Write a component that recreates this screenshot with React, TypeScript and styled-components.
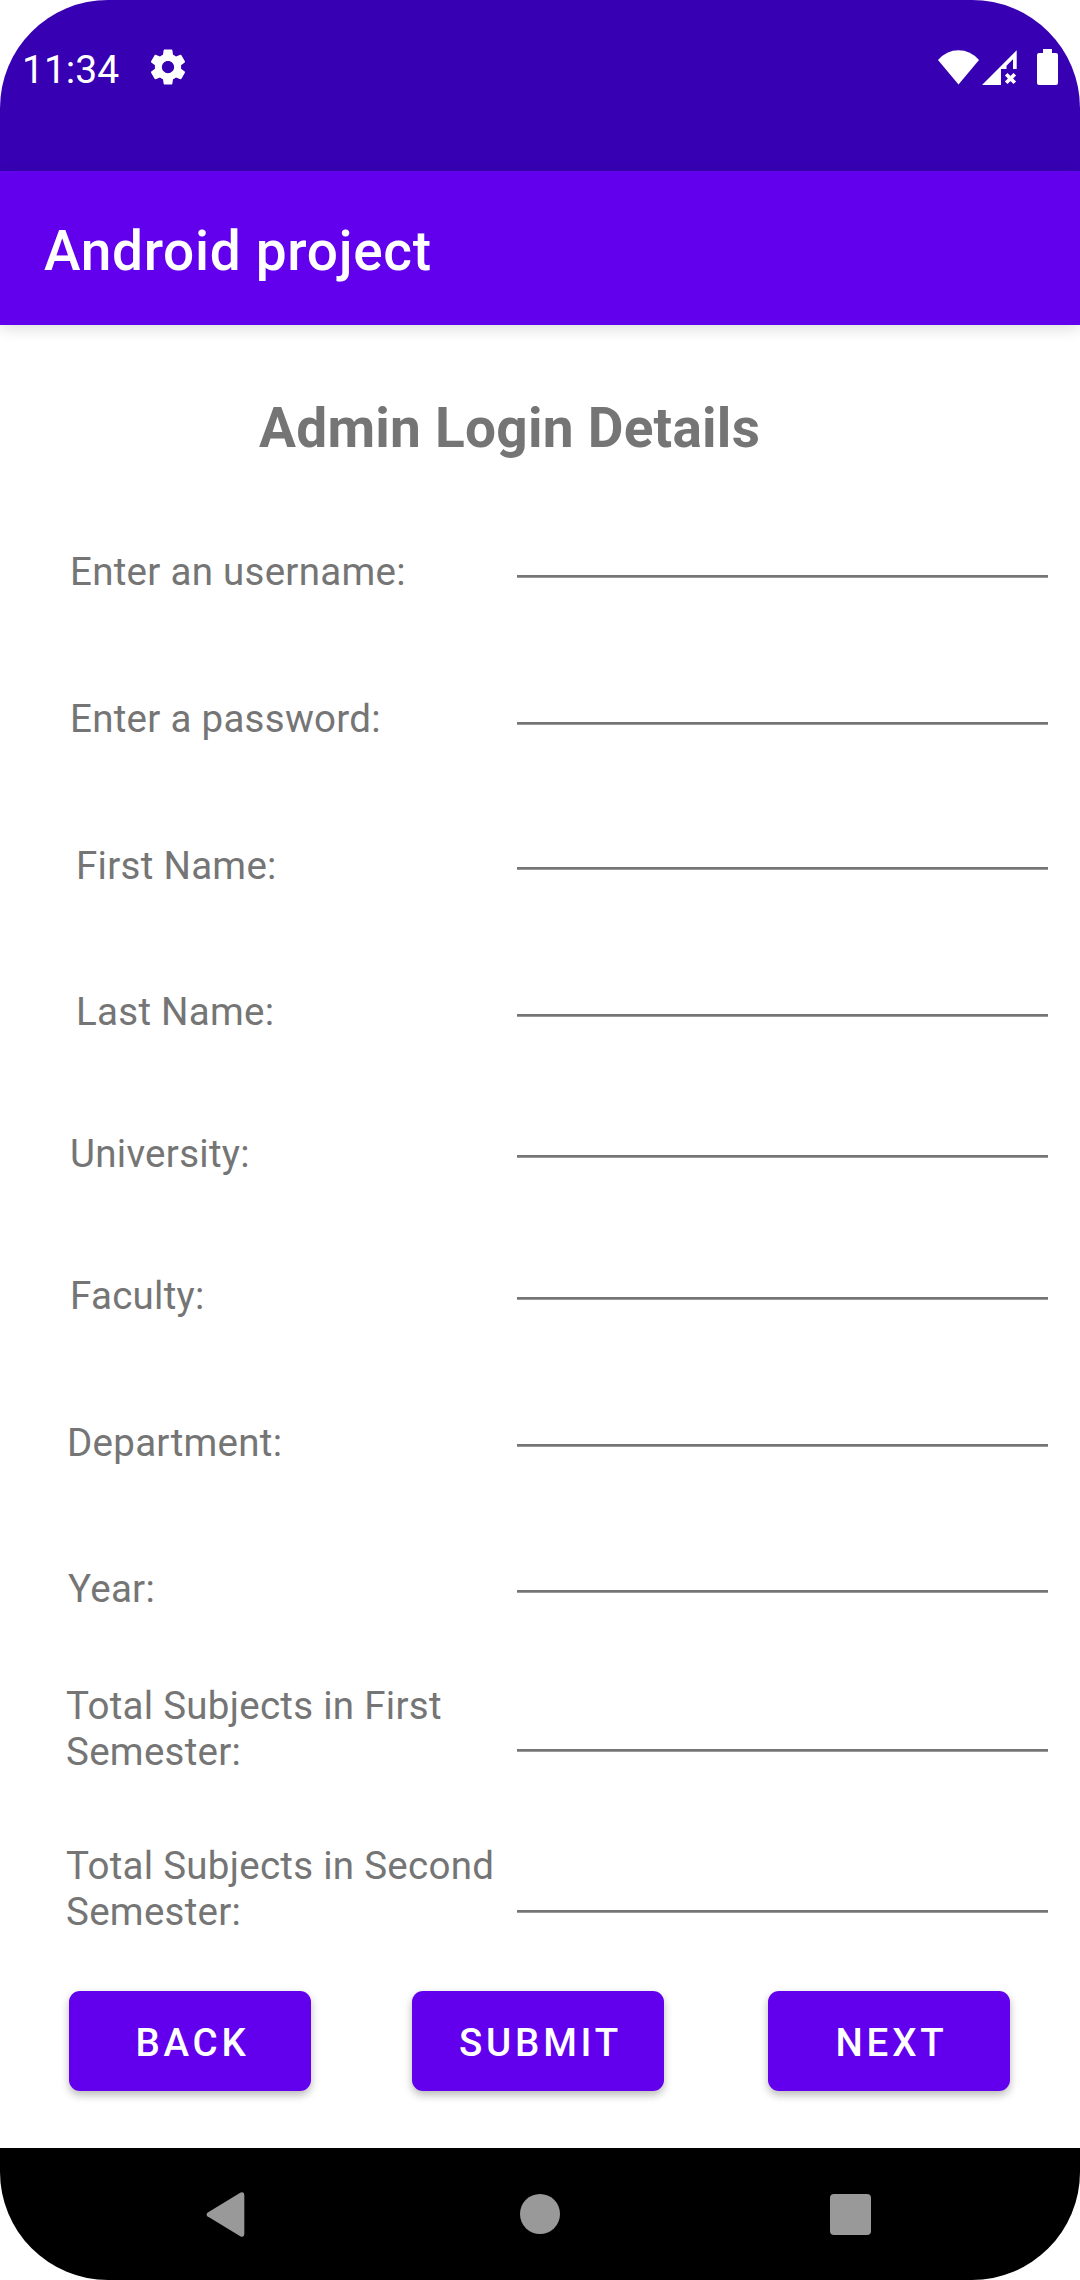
import React from "react";
import styled, { createGlobalStyle } from "styled-components";

const GlobalStyle = createGlobalStyle`
  * { box-sizing: border-box; }
  html, body { margin: 0; background: #fff; }
  body { font-family: Roboto, "Noto Sans", sans-serif; }
`;

const Screen = styled.div`
  width: 1080px;
  height: 2280px;
  border-radius: 108px;
  overflow: hidden;
  display: flex;
  flex-direction: column;
  background: #fff;
`;

const StatusBar = styled.header`
  height: 171px;
  flex: none;
  background: #3700b3;
  color: #fff;
  display: flex;
  align-items: flex-start;
  padding: 46px 22px 0 22px;
`;

const Clock = styled.span`
  font-size: 39px;
  line-height: 48px;
  width: 124px;
`;

const StatusIcons = styled.div`
  margin-left: auto;
  display: flex;
  align-items: flex-start;
`;

const Glyph = styled.svg<{ $gap?: number }>`
  display: block;
  flex: none;
  margin-left: ${(p) => p.$gap ?? 0}px;
`;

const Toolbar = styled.div`
  height: 154px;
  flex: none;
  background: #6200ee;
  display: flex;
  align-items: center;
  padding: 6px 44px 0;
  box-shadow: 0 4px 14px rgba(0, 0, 0, 0.13);
`;

const ToolbarTitle = styled.h1`
  margin: 0;
  color: #fff;
  font-size: 55px;
  font-weight: 500;
  line-height: 64px;
  letter-spacing: 0.0125em;
`;

const Content = styled.main`
  flex: 1;
  display: flex;
  flex-direction: column;
`;

const FormTitle = styled.h2`
  margin: 0;
  padding: 71px 0 0 259px;
  height: 180px;
  color: #757575;
  font-size: 55px;
  font-weight: 700;
  line-height: 64px;
  letter-spacing: 0.23px;
`;

const Form = styled.form`
  display: flex;
  flex-direction: column;
  height: 1456px;
`;

const Field = styled.div<{ $height: number }>`
  height: ${(p) => p.$height}px;
  flex: none;
  display: flex;
  justify-content: space-between;
  padding-right: 32px;
`;

const Label = styled.label<{ $indent: number; $drop: number }>`
  width: 517px;
  padding: ${(p) => p.$drop}px 0 0 ${(p) => p.$indent}px;
  color: #757575;
  font-size: 38.5px;
  line-height: 46px;
  letter-spacing: 0.28px;
  white-space: pre-line;
`;

const Input = styled.input<{ $depth: number }>`
  width: 531px;
  height: ${(p) => p.$depth}px;
  padding: 0;
  border: 0;
  border-bottom: 2px solid #757575;
  border-radius: 0;
  box-shadow: 0 1px 0 #999;
  outline: none;
  background: transparent;
  color: #212121;
  font: 400 49px Roboto, sans-serif;
`;

const Actions = styled.div`
  display: flex;
  padding: 30px 70px 0 69px;
`;

const Button = styled.button<{ $width: number; $gap?: number }>`
  width: ${(p) => p.$width}px;
  height: 100px;
  margin: 0 0 0 ${(p) => p.$gap ?? 0}px;
  border: 0;
  border-radius: 11px;
  padding: 3px 0 0 5px;
  background: #6200ee;
  color: #fff;
  font: 500 38.5px/46px Roboto, sans-serif;
  letter-spacing: 3.8px;
  box-shadow: 0 4px 9px rgba(0, 0, 0, 0.28);
`;

const NavBar = styled.nav`
  height: 132px;
  flex: none;
  background: #000;
  display: flex;
  align-items: center;
  padding-left: 206px;
`;

/* base: first text baseline, line: top of the underline */
const fields = [
  { id: "username", label: "Enter an username:", indent: 70, base: 585, line: 575 },
  { id: "password", label: "Enter a password:", indent: 70, base: 732, line: 722 },
  { id: "first", label: "First Name:", indent: 76, base: 879, line: 867 },
  { id: "last", label: "Last Name:", indent: 76, base: 1025, line: 1014 },
  { id: "university", label: "University:", indent: 70, base: 1167, line: 1155 },
  { id: "faculty", label: "Faculty:", indent: 70, base: 1309, line: 1297 },
  { id: "department", label: "Department:", indent: 67, base: 1456, line: 1444 },
  { id: "year", label: "Year:", indent: 68, base: 1602, line: 1590 },
  { id: "sem1", label: "Total Subjects in First\nSemester:", indent: 66, base: 1719, line: 1749 },
  { id: "sem2", label: "Total Subjects in Second\nSemester:", indent: 66, base: 1879, line: 1910 },
];

const FORM_TOP = 505;
const FORM_END = 1961;
const ASCENT = 36;

const rows = fields.map((f, i) => {
  const top = i === 0 ? FORM_TOP : f.base - 60;
  const next = i === fields.length - 1 ? FORM_END : fields[i + 1].base - 60;
  return { ...f, height: next - top, drop: f.base - ASCENT - top, depth: f.line + 2 - top };
});

export default function App() {
  return (
    <Screen>
      <GlobalStyle />
      <StatusBar>
        <Clock>11:34</Clock>
        <Glyph $gap={1} width="42" height="42" viewBox="0 0 24 24" fill="#fff">
          <path d="M19.43 12.98c.04-.32.07-.64.07-.98s-.03-.66-.07-.98l2.11-1.65c.19-.15.24-.42.12-.64l-2-3.46c-.12-.22-.39-.3-.61-.22l-2.49 1c-.52-.4-1.08-.73-1.69-.98l-.38-2.65C14.46 2.18 14.25 2 14 2h-4c-.25 0-.46.18-.49.42l-.38 2.65c-.61.25-1.17.59-1.69.98l-2.49-1c-.23-.09-.49 0-.61.22l-2 3.46c-.13.22-.07.49.12.64l2.11 1.65c-.04.32-.07.65-.07.98s.03.66.07.98l-2.11 1.65c-.19.15-.24.42-.12.64l2 3.46c.12.22.39.3.61.22l2.49-1c.52.4 1.08.73 1.69.98l.38 2.65c.03.24.24.42.49.42h4c.25 0 .46-.18.49-.42l.38-2.65c.61-.25 1.17-.59 1.69-.98l2.49 1c.23.09.49 0 .61-.22l2-3.46c.12-.22.07-.49-.12-.64l-2.11-1.65zM12 15.5c-1.93 0-3.5-1.57-3.5-3.5s1.57-3.5 3.5-3.5 3.5 1.57 3.5 3.5-1.57 3.5-3.5 3.5z" />
        </Glyph>
        <StatusIcons>
          <Glyph width="41" height="40" viewBox="0 0 41 40" fill="#fff">
            <path d="M0 14 Q8.5 4.3 20.5 4.3 T41 14 L20.5 38.5Z" />
          </Glyph>
          <Glyph $gap={3} width="36" height="40" viewBox="0 0 36 40" fill="#fff">
            <path d="M0 39 34.700 4.300V23H31V13.300L24.500 19.800V23H19V39Z" />
            <path d="M24.200 28.200 32.800 36.800M32.800 28.200 24.200 36.800" stroke="#fff" strokeWidth="3.700" />
          </Glyph>
          <Glyph $gap={19} width="21" height="40" viewBox="0 0 21 40" fill="#fff">
            <path d="M6 3h9v4h4a2 2 0 0 1 2 2v28a2 2 0 0 1-2 2H2a2 2 0 0 1-2-2V9a2 2 0 0 1 2-2h4z" />
          </Glyph>
        </StatusIcons>
      </StatusBar>
      <Toolbar>
        <ToolbarTitle>Android project</ToolbarTitle>
      </Toolbar>
      <Content>
        <FormTitle>Admin Login Details</FormTitle>
        <Form>
          {rows.map((r) => (
            <Field key={r.id} $height={r.height}>
              <Label htmlFor={r.id} $indent={r.indent} $drop={r.drop}>{r.label}</Label>
              <Input id={r.id} $depth={r.depth} />
            </Field>
          ))}
        </Form>
        <Actions>
          <Button $width={242}>BACK</Button>
          <Button $width={252} $gap={101}>SUBMIT</Button>
          <Button $width={242} $gap={104}>NEXT</Button>
        </Actions>
      </Content>
      <NavBar>
        <Glyph width="39" height="45" viewBox="0 0 39 46" fill="#999">
          <path d="M1 21.200 35 .6Q38.700-.8 38.700 3V43Q38.700 46.800 35 45.400L1 24.800Q-.6 23 1 21.200Z" />
        </Glyph>
        <Glyph $gap={275} width="40" height="40" viewBox="0 0 40 40" fill="#999">
          <circle cx="20" cy="20" r="20" />
        </Glyph>
        <Glyph $gap={270} width="41" height="41" viewBox="0 0 41 41" fill="#999">
          <rect width="41" height="41" rx="4" />
        </Glyph>
      </NavBar>
    </Screen>
  );
}
